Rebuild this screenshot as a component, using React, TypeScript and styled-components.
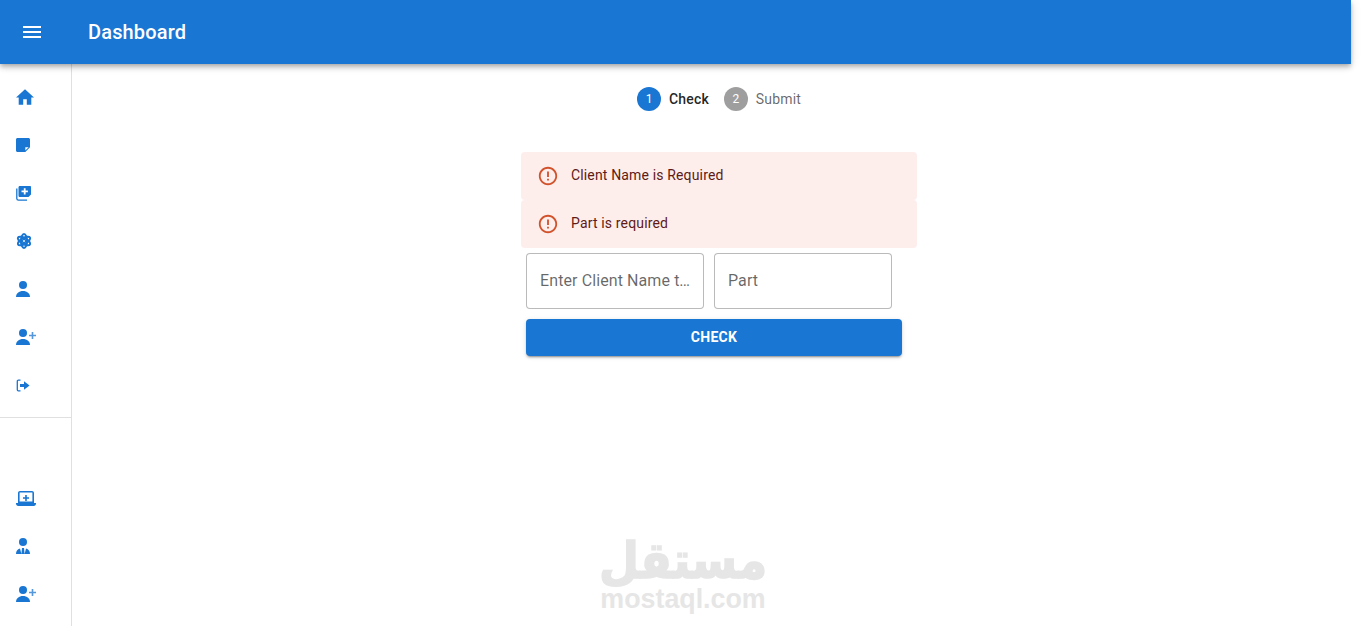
import React from "react";
import styled, { createGlobalStyle } from "styled-components";

const GlobalStyle = createGlobalStyle`
  html, body {
    margin: 0;
    height: 100%;
    background: #fff;
    overflow: hidden;
    font-family: Roboto, "Liberation Sans", sans-serif;
  }
`;

const Page = styled.div`
  position: relative;
  width: 1366px;
  height: 626px;
  display: flex;
  flex-direction: column;
  overflow: hidden;
`;

const AppBar = styled.header`
  position: relative;
  z-index: 2;
  flex: none;
  width: 1351px;
  height: 64px;
  display: flex;
  align-items: center;
  padding-left: 8px;
  box-sizing: border-box;
  background: #1976d2;
  color: #fff;
  box-shadow: 0 2px 4px -1px rgba(0, 0, 0, 0.2), 0 4px 5px 0 rgba(0, 0, 0, 0.14),
    0 1px 10px 0 rgba(0, 0, 0, 0.12);
`;

const MenuButton = styled.button`
  width: 48px;
  height: 48px;
  padding: 0;
  border: 0;
  background: none;
  color: #fff;
  display: flex;
  align-items: center;
  justify-content: center;
`;

const Title = styled.h1`
  margin: 0 0 0 32px;
  font-size: 20px;
  font-weight: 500;
  line-height: 32px;
  letter-spacing: 0.15px;
`;

const Body = styled.div`
  flex: 1;
  display: flex;
  min-height: 0;
`;

const Sidebar = styled.nav`
  flex: none;
  width: 72px;
  box-sizing: border-box;
  border-right: 1px solid rgba(0, 0, 0, 0.12);
  padding-top: 1px;
`;

const NavList = styled.div<{ $spacer?: boolean }>`
  padding: ${(p) => (p.$spacer ? "56px 0 8px" : "8px 0")};
`;

const Divider = styled.hr`
  margin: 0;
  border: 0;
  height: 1px;
  background: rgba(0, 0, 0, 0.12);
`;

const NavItem = styled.div`
  height: 48px;
  display: flex;
  align-items: center;
  padding-left: 16px;
  color: #1976d2;
`;

const Main = styled.main`
  flex: 1;
  display: flex;
  flex-direction: column;
  align-items: center;
  padding-top: 23px;
`;

const Stepper = styled.div`
  display: flex;
  align-items: center;
  gap: 15px;
  margin-bottom: 41px;
`;

const Step = styled.div`
  display: flex;
  align-items: center;
  gap: 8px;
`;

const StepDot = styled.span<{ $active?: boolean }>`
  width: 24px;
  height: 24px;
  border-radius: 50%;
  display: flex;
  align-items: center;
  justify-content: center;
  font-size: 12px;
  color: #fff;
  background: ${(p) => (p.$active ? "#1976d2" : "#9e9e9e")};
`;

const StepLabel = styled.span<{ $active?: boolean }>`
  font-size: 14px;
  line-height: 20px;
  letter-spacing: 0.15px;
  font-weight: ${(p) => (p.$active ? 500 : 400)};
  color: ${(p) => (p.$active ? "rgba(0, 0, 0, 0.87)" : "rgba(0, 0, 0, 0.6)")};
`;

const Form = styled.form`
  width: 396px;
  display: flex;
  flex-direction: column;
`;

const Alert = styled.div`
  height: 48px;
  box-sizing: border-box;
  display: flex;
  align-items: center;
  gap: 12px;
  padding: 0 16px;
  border-radius: 4px;
  background: #fdeeec;
  color: #611a15;
  font-size: 14px;
  letter-spacing: 0.15px;
  svg {
    color: #d2522c;
  }
`;

const AlertText = styled.span`
  margin-bottom: 2px;
`;

const Fields = styled.div`
  display: flex;
  gap: 10px;
  margin: 5px 5px 10px;
`;

const Field = styled.input`
  width: 178px;
  height: 56px;
  box-sizing: border-box;
  padding: 0 10px 2px 13px;
  border: 1px solid rgba(0, 0, 0, 0.27);
  border-radius: 4px;
  outline: none;
  font-family: Roboto, "Liberation Sans", sans-serif;
  font-size: 16px;
  letter-spacing: 0.1px;
  text-overflow: ellipsis;
  &::placeholder {
    color: rgba(0, 0, 0, 0.6);
    opacity: 1;
  }
`;

const CheckButton = styled.button`
  width: 376px;
  height: 37px;
  margin-left: 5px;
  padding: 0 0 2px;
  border: 0;
  border-radius: 4px;
  background: #1976d2;
  color: #fff;
  font-family: Roboto, "Liberation Sans", sans-serif;
  font-size: 14px;
  font-weight: 700;
  letter-spacing: 0.3px;
  text-transform: uppercase;
  box-shadow: 0 3px 1px -2px rgba(0, 0, 0, 0.2), 0 2px 2px 0 rgba(0, 0, 0, 0.14),
    0 1px 5px 0 rgba(0, 0, 0, 0.12);
`;

const Watermark = styled.div`
  position: absolute;
  left: 601px;
  top: 535px;
  width: 164px;
  display: flex;
  flex-direction: column;
  align-items: center;
  gap: 3px;
  color: #e6e6e6;
  pointer-events: none;
`;

const WatermarkArabic = styled.div`
  font-family: "DejaVu Sans", sans-serif;
  font-weight: 700;
  font-size: 46px;
  line-height: 50px;
  white-space: nowrap;
  transform: scaleY(1.1);
  -webkit-text-stroke: 1.5px #e6e6e6;
`;

const WatermarkLatin = styled.div`
  font-family: "Liberation Sans", sans-serif;
  font-weight: 700;
  font-size: 26.800px;
  line-height: 22px;
  white-space: nowrap;
`;

const Home = () => (
  <svg width="18" height="16" viewBox="2 3 20 17" fill="currentColor">
    <path d="M10 20v-6h4v6h5v-8h3L12 3 2 12h3v8z" />
  </svg>
);

const Note = () => (
  <svg width="14" height="14" viewBox="3 3 18 18" fill="currentColor">
    <path d="M19 3H5c-1.100 0-2 .9-2 2v14c0 1.100.9 2 2 2h10l6-6V5c0-1.100-.9-2-2-2zm-4 16.200V15h4.200z" />
  </svg>
);

const LibraryAdd = () => (
  <svg width="15" height="15" viewBox="0 0 15 15" fill="currentColor">
    <path
      fillRule="evenodd"
      d="M3.800 0H14c.6 0 1 .4 1 1v7.500L12.500 11H3.800c-.7 0-1.300-.6-1.300-1.300V1.300C2.500.6 3.100 0 3.800 0zM7.800 2.200v2.300H5.500v1.800h2.300v2.300h1.800V6.300h2.300V4.500H9.600V2.200z"
    />
    <path d="M.8 2.500v10c0 1 .7 1.700 1.700 1.700h8.500" fill="none" stroke="currentColor" strokeWidth="1.300" />
  </svg>
);

const Atom = () => (
  <svg width="16" height="16" viewBox="0 0 16 16" fill="none" stroke="currentColor" strokeWidth="2">
    <ellipse cx="8" cy="8" rx="3" ry="6.900" />
    <ellipse cx="8" cy="8" rx="3" ry="6.900" transform="rotate(60 8 8)" />
    <ellipse cx="8" cy="8" rx="3" ry="6.900" transform="rotate(120 8 8)" />
    <circle cx="8" cy="8" r="1.600" strokeWidth="1.400" />
  </svg>
);

const Person = () => (
  <svg width="14" height="16" viewBox="0 0 14 16" fill="currentColor">
    <circle cx="7" cy="4" r="4" />
    <path d="M0 16c0-3.600 3-6 7-6s7 2.400 7 6z" />
  </svg>
);

const PersonAdd = () => (
  <svg width="21" height="16" viewBox="0 0 21 16" fill="currentColor">
    <circle cx="7" cy="4" r="4" />
    <path d="M0 16c0-3.600 3-6 7-6s7 2.400 7 6z" />
    <path d="M15.700 3h1.600v2.700H20v1.600h-2.700V10h-1.600V7.300H13V5.700h2.700z" opacity="0.75" />
  </svg>
);

const Logout = () => (
  <svg width="14" height="13" viewBox="0 0 14 13" fill="currentColor">
    <path d="M4.500 1.200H2.300c-.6 0-1 .4-1 1v8.600c0 .6.4 1 1 1h2.200" fill="none" stroke="currentColor" strokeWidth="1.300" />
    <path d="M4 5h4V2.200l5.600 4.300L8 10.800V8H4z" />
  </svg>
);

const LaptopAdd = () => (
  <svg width="20" height="15" viewBox="0 0 20 15" fill="currentColor">
    <path d="M2 2c0-1.100.9-2 2-2h12c1.100 0 2 .9 2 2v10H2zm1.600 0v8.400h12.800V1.600H3.600z" fillRule="evenodd" />
    <path d="M0 12h20v.8c0 1.200-1 2.200-2.200 2.200H2.200C1 15 0 14 0 12.800z" />
    <path d="M9.200 4h1.600v2.200H13v1.600h-2.200V10H9.200V7.800H7V6.200h2.200z" />
  </svg>
);

const SuitPerson = () => (
  <svg width="14" height="16" viewBox="0 0 14 16" fill="currentColor">
    <circle cx="7" cy="4" r="4" />
    <path d="M0 16c0-2.700 1.300-4.700 4-5.500L5.400 16zM14 16c0-2.700-1.300-4.700-4-5.500L8.600 16zM6 10h2l.6 6H5.400z" />
  </svg>
);

const ErrorOutline = () => (
  <svg width="22" height="22" viewBox="0 0 24 24" fill="currentColor">
    <path d="M11 15h2v2h-2zm0-8h2v6h-2zm.99-5C6.470 2 2 6.480 2 12s4.470 10 9.990 10C17.520 22 22 17.520 22 12S17.520 2 11.990 2zM12 20c-4.420 0-8-3.580-8-8s3.580-8 8-8 8 3.580 8 8-3.580 8-8 8z" />
  </svg>
);

const topNav = [Home, Note, LibraryAdd, Atom, Person, PersonAdd, Logout];
const bottomNav = [LaptopAdd, SuitPerson, PersonAdd];
const errors = ["Client Name is Required", "Part is required"];

export default function App() {
  return (
    <Page>
      <GlobalStyle />
      <AppBar>
        <MenuButton type="button" aria-label="menu">
          <svg width="24" height="24" viewBox="0 0 24 24" fill="currentColor">
            <path d="M3 18h18v-2H3v2zm0-5h18v-2H3v2zm0-7v2h18V6H3z" />
          </svg>
        </MenuButton>
        <Title>Dashboard</Title>
      </AppBar>
      <Body>
        <Sidebar>
          <NavList>
            {topNav.map((Icon, i) => (
              <NavItem key={i}>
                <Icon />
              </NavItem>
            ))}
          </NavList>
          <Divider />
          <NavList $spacer>
            {bottomNav.map((Icon, i) => (
              <NavItem key={i}>
                <Icon />
              </NavItem>
            ))}
          </NavList>
        </Sidebar>
        <Main>
          <Stepper>
            <Step>
              <StepDot $active>1</StepDot>
              <StepLabel $active>Check</StepLabel>
            </Step>
            <Step>
              <StepDot>2</StepDot>
              <StepLabel>Submit</StepLabel>
            </Step>
          </Stepper>
          <Form>
            {errors.map((text) => (
              <Alert key={text}>
                <ErrorOutline />
                <AlertText>{text}</AlertText>
              </Alert>
            ))}
            <Fields>
              <Field placeholder="Enter Client Name to Check" />
              <Field placeholder="Part" />
            </Fields>
            <CheckButton type="button">Check</CheckButton>
          </Form>
        </Main>
      </Body>
      <Watermark>
        <WatermarkArabic dir="rtl">مستقل</WatermarkArabic>
        <WatermarkLatin>mostaql.com</WatermarkLatin>
      </Watermark>
    </Page>
  );
}
